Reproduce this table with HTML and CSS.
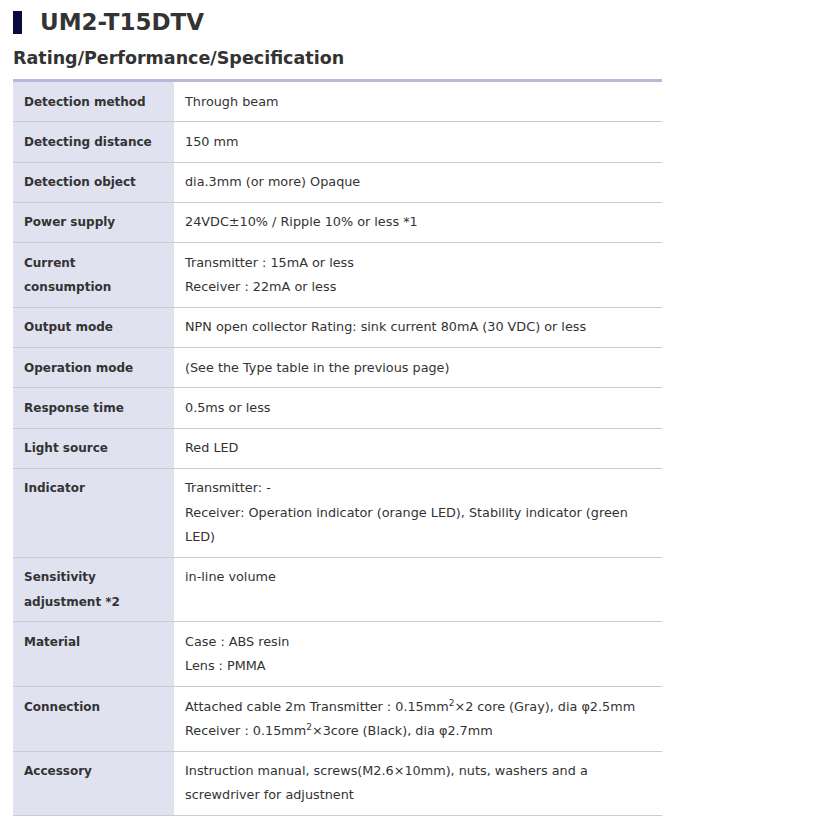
FILE: index.html
```html
<!DOCTYPE html>
<html lang="en">
<head>
<meta charset="utf-8">
<title>UM2-T15DTV</title>
<link rel="stylesheet" href="styles.css">
</head>
<body>
<div class="page">
  <h1 class="title"><span class="mark"></span>UM2-T15DTV</h1>
  <h2 class="subtitle">Rating/Performance/Specification</h2>
  <table class="spec">
    <tr><th>Detection method</th><td>Through beam</td></tr>
    <tr><th>Detecting distance</th><td>150 mm</td></tr>
    <tr><th>Detection object</th><td>dia.3mm (or more) Opaque</td></tr>
    <tr><th>Power supply</th><td>24VDC±10% / Ripple 10% or less *1</td></tr>
    <tr><th>Current<br>consumption</th><td>Transmitter : 15mA or less<br>Receiver : 22mA or less</td></tr>
    <tr><th>Output mode</th><td>NPN open collector Rating: sink current 80mA (30 VDC) or less</td></tr>
    <tr><th>Operation mode</th><td>(See the Type table in the previous page)</td></tr>
    <tr><th>Response time</th><td>0.5ms or less</td></tr>
    <tr><th>Light source</th><td>Red LED</td></tr>
    <tr><th>Indicator</th><td>Transmitter: -<br>Receiver: Operation indicator (orange LED), Stability indicator (green LED)</td></tr>
    <tr><th>Sensitivity<br>adjustment *2</th><td>in-line volume</td></tr>
    <tr><th>Material</th><td>Case : ABS resin<br>Lens : PMMA</td></tr>
    <tr><th>Connection</th><td>Attached cable 2m Transmitter : 0.15mm<sup>2</sup>×2 core (Gray), dia φ2.5mm<br>Receiver : 0.15mm<sup>2</sup>×3core (Black), dia φ2.7mm</td></tr>
    <tr><th>Accessory</th><td>Instruction manual, screws(M2.6×10mm), nuts, washers and a screwdriver for adjustnent</td></tr>
  </table>
</div>
</body>
</html>
```
FILE: styles.css
```css
* { box-sizing: border-box; }
body {
  margin: 0;
  background: #fff;
  font-family: "DejaVu Sans", Verdana, sans-serif;
  color: #333;
}
.page {
  padding: 6px 13px 0 13px;
  width: 662px;
}
.title {
  display: flex;
  align-items: center;
  margin: 0;
  font-size: 23px;
  font-weight: bold;
  line-height: 32px;
  color: #333;
}
.mark {
  display: inline-block;
  width: 9px;
  height: 23px;
  background: #0a0a3c;
  margin-right: 18px;
}
.subtitle {
  margin: 8px 0 0 0;
  font-size: 17.5px;
  font-weight: bold;
  line-height: 24px;
  color: #333;
}
.spec {
  margin-top: 9px;
  width: 649px;
  border-collapse: collapse;
  border-top: 3px solid #b6bad8;
  font-size: 12.8px;
  line-height: 24.3px;
}
.spec th, .spec td {
  padding: 7.5px 11px 7.5px 11px;
  vertical-align: top;
  text-align: left;
  border-bottom: 1px solid #ccc;
}
.spec th {
  width: 161px;
  background: #e0e2ef;
  font-weight: bold;
  font-size: 12px;
  color: #333;
}
.spec td {
  color: #333;
}
.spec sup {
  font-size: 9px;
  line-height: 0;
  vertical-align: 5px;
}
```
